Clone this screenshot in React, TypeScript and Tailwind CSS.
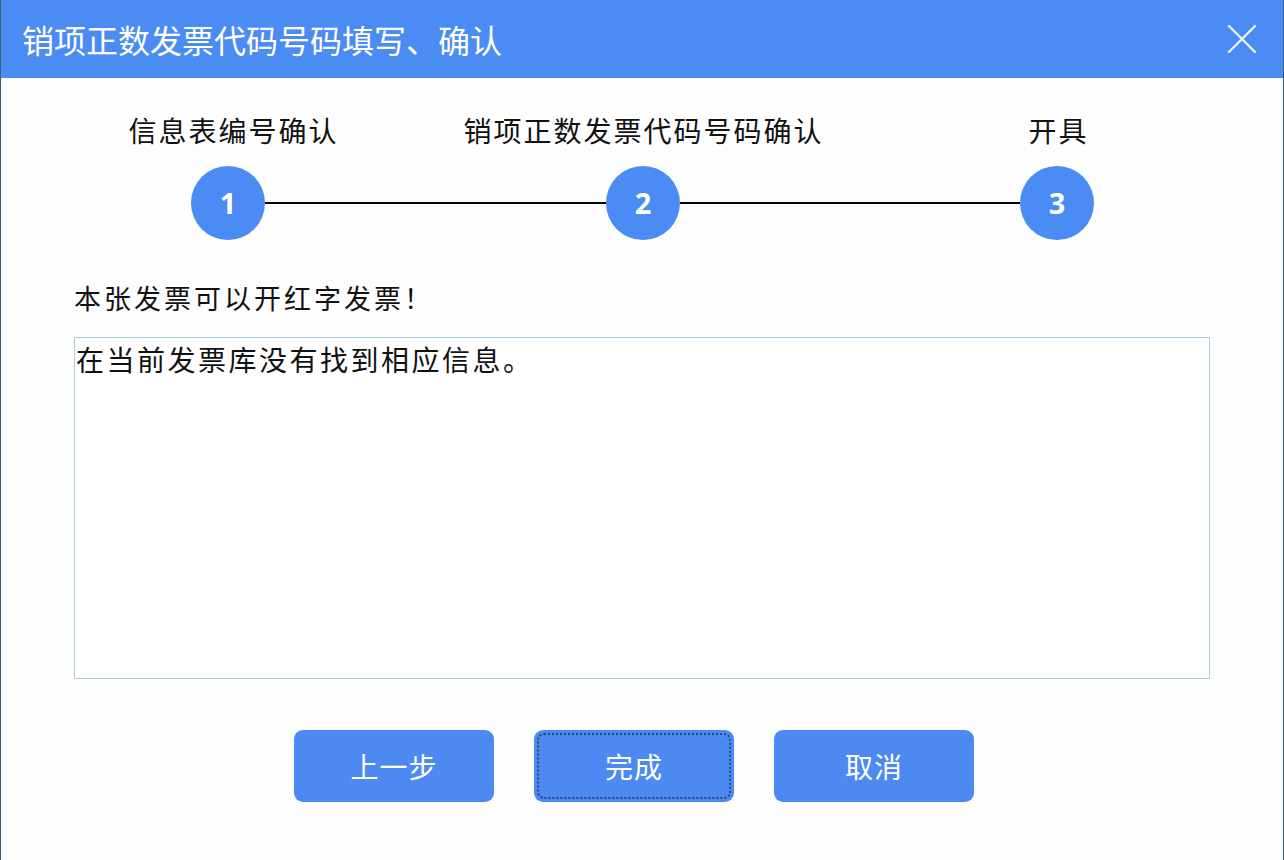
import type { ReactNode } from "react";

const cjk = "font-['Noto_Sans_CJK_SC','Noto_Sans',sans-serif]";

const steps = [
  { label: "信息表编号确认", shift: "pl-[10px]" },
  { label: "销项正数发票代码号码确认", shift: "" },
  { label: "开具", shift: "" },
];

function StepCircle({ n }: { n: number }) {
  return (
    <div className="flex h-[74px] w-[74px] shrink-0 items-center justify-center rounded-full bg-[#4b8bf4] font-['Open_Sans',sans-serif] text-[29px] font-bold text-white">
      {n}
    </div>
  );
}

function DialogButton({ children, focused }: { children: ReactNode; focused?: boolean }) {
  return (
    <button
      type="button"
      className="relative flex h-[72px] w-[200px] items-center justify-center rounded-[9px] bg-[#4c8af1] text-[28px] tracking-[1px] text-white"
    >
      {focused && (
        <span className="absolute inset-[3px] rounded-[7px] border-2 border-dotted border-[#27467e]" />
      )}
      <span className="relative">{children}</span>
    </button>
  );
}

export default function App() {
  return (
    <div className={`flex h-[860px] w-[1284px] flex-col overflow-hidden border-x border-[#3b5f73] bg-[#fdfdfe] ${cjk}`}>
      {/* title bar */}
      <div className="flex h-[78px] shrink-0 items-center justify-between bg-[#4b8bf4] pl-[21px] pr-[26px]">
        <h1 className="text-[32px] font-normal leading-none text-white">销项正数发票代码号码填写、确认</h1>
        <svg width="30" height="28" viewBox="0 0 30 28" className="text-[#eef3fd]">
          <path d="M2 1 L28 27 M28 1 L2 27" stroke="currentColor" strokeWidth="2.4" strokeLinecap="round" />
        </svg>
      </div>

      {/* step labels */}
      <div className="mt-[34px] flex pl-[20px]">
        {steps.map((s) => (
          <div key={s.label} className={`w-[415px] text-center text-[28px] leading-[36px] tracking-[2px] text-[#111] ${s.shift}`}>
            {s.label}
          </div>
        ))}
      </div>

      {/* step track */}
      <div className="mt-[18px] flex items-center pl-[190px]">
        <StepCircle n={1} />
        <div className="h-[2px] w-[341px] bg-black" />
        <StepCircle n={2} />
        <div className="h-[2px] w-[340px] bg-black" />
        <StepCircle n={3} />
      </div>

      <p className="ml-[73px] mt-[40px] text-[27px] leading-[36px] tracking-[3px] text-[#111]">本张发票可以开红字发票！</p>

      <div className="ml-[73px] mt-[21px] h-[342px] w-[1136px] border border-[#a9cfe1] bg-white px-[1px] pt-[3px] text-[28px] leading-[36px] tracking-[2.5px] text-[#111]">
        在当前发票库没有找到相应信息。
      </div>

      <div className="mt-[51px] flex gap-[40px] pl-[293px]">
        <DialogButton>上一步</DialogButton>
        <DialogButton focused>完成</DialogButton>
        <DialogButton>取消</DialogButton>
      </div>
    </div>
  );
}
